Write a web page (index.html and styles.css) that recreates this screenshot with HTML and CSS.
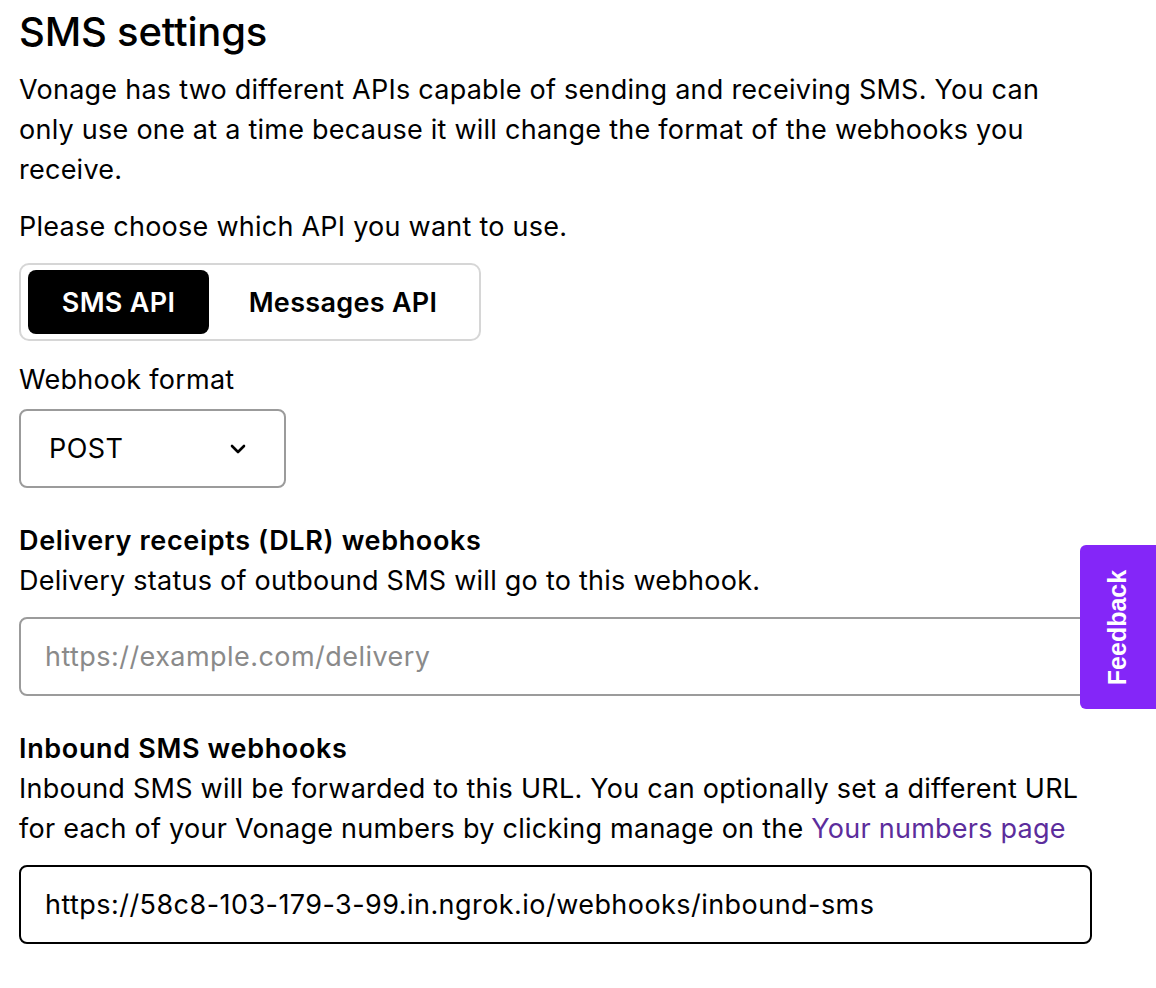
FILE: index.html
```html
<!DOCTYPE html>
<html>
<head>
<meta charset="utf-8">
<link rel="stylesheet" href="styles.css">
</head>
<body>
<main class="page">
  <h1 class="title">SMS settings</h1>
  <p class="text intro">Vonage has two different APIs capable of sending and receiving SMS. You can only use one at a time because it will change the format of the webhooks you receive.</p>
  <p class="text choose">Please choose which API you want to use.</p>
  <div class="toggle">
    <button class="opt active">SMS API</button>
    <button class="opt">Messages API</button>
  </div>
  <label class="text label">Webhook format</label>
  <div class="select">
    <span>POST</span>
    <svg class="chev" width="16" height="10" viewBox="0 0 16 10"><path d="M2 2 L8 8 L14 2" fill="none" stroke="#000" stroke-width="2.6" stroke-linecap="round" stroke-linejoin="round"/></svg>
  </div>
  <section class="field">
    <h2 class="heading">Delivery receipts (DLR) webhooks</h2>
    <p class="text">Delivery status of outbound SMS will go to this webhook.</p>
    <div class="input placeholder">https://example.com/delivery</div>
  </section>
  <section class="field">
    <h2 class="heading">Inbound SMS webhooks</h2>
    <p class="text">Inbound SMS will be forwarded to this URL. You can optionally set a different URL for each of your Vonage numbers by clicking manage on the <a class="link" href="#">Your numbers page</a></p>
    <div class="input filled">https://58c8-103-179-3-99.in.ngrok.io/webhooks/inbound-sms</div>
  </section>
</main>
<div class="feedback"><span>Feedback</span></div>
</body>
</html>
```
FILE: styles.css
```css
html, body {
  margin: 0;
  padding: 0;
  background: #fff;
}
body {
  font-family: Inter, "Noto Sans", sans-serif;
  color: #000;
}
.page {
  width: 1072px;
  padding: 0 0 0 19px;
  display: flex;
  flex-direction: column;
  align-items: flex-start;
}
.title {
  font-size: 40px;
  font-weight: 500;
  margin: 8px 0 0;
  line-height: 48px;
  letter-spacing: -0.2px;
}
.text {
  font-size: 27px;
  line-height: 40px;
  margin: 0;
  letter-spacing: 0.25px;
}
.intro {
  margin-top: 14px;
}
.choose {
  margin-top: 17px;
}
.toggle {
  margin-top: 16px;
  border: 2px solid #d6d6d6;
  border-radius: 10px;
  padding: 5px 2px 5px 7px;
  display: flex;
  width: 462px;
  box-sizing: border-box;
  height: 78px;
}
.opt {
  font-family: inherit;
  font-size: 27px;
  font-weight: 600;
  border: none;
  background: transparent;
  color: #000;
  height: 64px;
  border-radius: 8px;
  padding: 0;
  letter-spacing: 0.3px;
  flex: 1;
}
.opt.active {
  background: #000;
  color: #fff;
  flex: 0 0 181px;
}
.label {
  margin-top: 19px;
}
.select {
  margin-top: 9px;
  width: 267px;
  height: 79px;
  box-sizing: border-box;
  border: 2px solid #9b9b9b;
  border-radius: 8px;
  display: flex;
  align-items: center;
  justify-content: space-between;
  padding: 0 38px 0 28px;
  font-size: 27px;
  letter-spacing: 0.4px;
}
.field {
  display: flex;
  flex-direction: column;
  align-items: flex-start;
  width: 100%;
}
.heading {
  font-size: 27px;
  font-weight: 600;
  line-height: 40px;
  margin: 33px 0 0;
  letter-spacing: 0.65px;
}
.input {
  margin-top: 16px;
  width: 1073px;
  height: 79px;
  box-sizing: border-box;
  border-radius: 8px;
  display: flex;
  align-items: center;
  padding: 0 24px;
  font-size: 27px;
  letter-spacing: 0.45px;
}
.placeholder {
  border: 2px solid #9b9b9b;
  color: #8a8a8a;
}
.filled {
  border: 2px solid #000;
  color: #000;
}
.link {
  color: #5c2d9c;
  text-decoration: none;
}
.feedback {
  position: absolute;
  left: 1080px;
  top: 545px;
  width: 76px;
  height: 164px;
  background: #8426f8;
  border-radius: 6px 0 0 6px;
  display: flex;
  align-items: center;
  justify-content: center;
}
.feedback span {
  transform: rotate(-90deg);
  color: #fff;
  font-family: "Liberation Sans", Arial, sans-serif;
  font-weight: 700;
  font-size: 25px;
  white-space: nowrap;
}
```
